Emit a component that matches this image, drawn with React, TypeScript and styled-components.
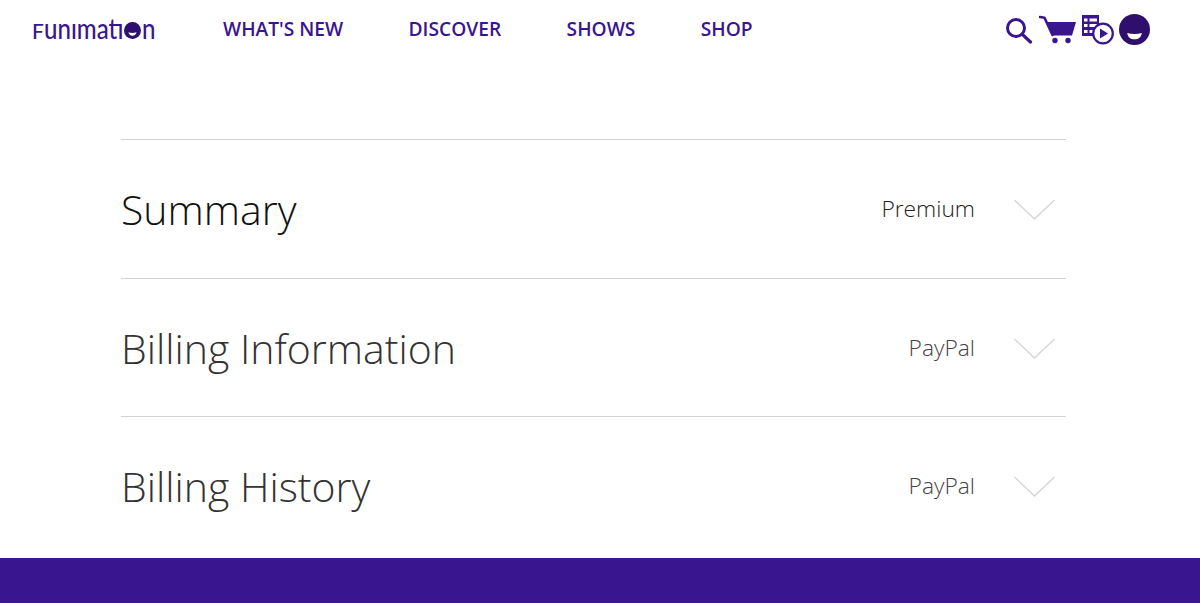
import React from "react";
import styled, { createGlobalStyle } from "styled-components";

const Global = createGlobalStyle`
  html, body { margin: 0; padding: 0; background: #fff; }
  body { font-family: "Open Sans", "Liberation Sans", sans-serif; }
`;

const Page = styled.div`
  width: 1200px;
  height: 603px;
  display: flex;
  flex-direction: column;
  overflow: hidden;
  background: #fff;
`;

const Header = styled.header`
  height: 59px;
  display: flex;
  align-items: center;
  padding: 0 50px 0 32px;
  flex: none;
`;

const Logo = styled.div`
  width: 124px;
  display: flex;
  align-items: baseline;
  color: #3a1590;
  font-family: "Lato", sans-serif;
  font-weight: 500;
  line-height: 30px;
  font-size: 29px;
`;

const LogoCap = styled.span`
  font-size: 21px;
  width: 12px;
  flex: none;
`;

const LogoWord = styled.span`
  display: inline-block;
  width: 80px;
  flex: none;
  white-space: nowrap;
  transform: scaleX(0.83);
  transform-origin: left center;
`;

const LogoDot = styled.span`
  width: 17px;
  height: 17px;
  flex: none;
  display: flex;
  align-self: center;
  margin-top: 1px;
`;

const LogoEnd = styled.span`
  display: inline-block;
  flex: none;
  margin-left: 1px;
  transform: scaleX(0.83);
  transform-origin: left center;
`;

const Nav = styled.nav`
  display: flex;
  margin-left: 67px;
  margin-top: -2px;
  gap: 65.4px;
`;

const NavLink = styled.a`
  color: #3a1590;
  font-size: 19.2px;
  font-weight: 600;
  line-height: 24px;
  white-space: nowrap;
`;

const Icons = styled.div`
  margin-left: auto;
  display: flex;
  align-items: center;
  gap: 5px;
  color: #3a1590;
`;

const Main = styled.main`
  flex: 1;
  padding: 80px 134px 0 121px;
`;

const Row = styled.section`
  height: 137.7px;
  border-top: 1px solid #d2d2d2;
  display: flex;
  align-items: center;
  justify-content: space-between;
  padding-right: 11px;
`;

const Title = styled.h2<{ $dark?: boolean }>`
  margin: 0;
  font-size: 41px;
  font-weight: 300;
  line-height: 56px;
  color: ${(p) => (p.$dark ? "#111" : "#333")};
`;

const Right = styled.div`
  display: flex;
  align-items: center;
  gap: 39px;
`;

const Value = styled.span<{ $dark?: boolean }>`
  font-size: 22.8px;
  font-weight: 300;
  line-height: 30px;
  color: ${(p) => (p.$dark ? "#222" : "#444")};
`;

const ChevronIcon = styled.svg`
  margin-top: 2px;
  flex: none;
`;

const Footer = styled.footer`
  height: 45px;
  background: #3a1590;
  flex: none;
`;

const Chevron = () => (
  <ChevronIcon width="41" height="22" viewBox="0 0 41 22" fill="none">
    <path d="M0.5 1 L20.5 20 L40.5 1" stroke="#d4d4d4" strokeWidth="1.3" />
  </ChevronIcon>
);

const Face = ({ size }: { size: number }) => (
  <svg width={size} height={size} viewBox="0 0 32 32">
    <circle cx="16" cy="16" r="16" fill="#2f0f6e" />
    <path d="M8.5 19.5 C13 21 19 21 23.5 19.5 C23 24 20 26 16 26 C12 26 9 24 8.5 19.5 Z" fill="#fff" />
  </svg>
);

const rows = [
  { title: "Summary", value: "Premium", dark: true },
  { title: "Billing Information", value: "PayPal" },
  { title: "Billing History", value: "PayPal" },
];

export default function App() {
  return (
    <Page>
      <Global />
      <Header>
        <Logo>
          <LogoCap>F</LogoCap>
          <LogoWord>unımatı</LogoWord>
          <LogoDot>
            <Face size={17} />
          </LogoDot>
          <LogoEnd>n</LogoEnd>
        </Logo>
        <Nav>
          <NavLink>WHAT'S NEW</NavLink>
          <NavLink>DISCOVER</NavLink>
          <NavLink>SHOWS</NavLink>
          <NavLink>SHOP</NavLink>
        </Nav>
        <Icons>
          <svg width="28" height="28" viewBox="0 0 28 28" fill="none" stroke="currentColor" strokeWidth="3">
            <circle cx="10" cy="12" r="8.5" />
            <path d="M16.3 18.3 L24.5 26" strokeLinecap="round" strokeWidth="3.2" />
          </svg>
          <svg width="37" height="30" viewBox="0 0 37 30" fill="currentColor">
            <path d="M1 2 L5.5 2.8 L13.5 20" fill="none" stroke="currentColor" strokeWidth="2.6" strokeLinecap="round" strokeLinejoin="round" />
            <path d="M8.5 7 H37 L33 20.5 H13.5 Z" />
            <circle cx="16" cy="25.5" r="2.7" />
            <circle cx="29" cy="25.5" r="2.7" />
          </svg>
          <svg width="33" height="31" viewBox="0 0 33 31" fill="none">
            <rect x="1" y="1" width="17" height="21" fill="currentColor" />
            <path d="M3 4.5 H6.5 V7.5 H3 Z M8.5 4.5 H16 V7.5 H8.5 Z M3 10 H6.5 V13 H3 Z M8.5 10 H16 V13 H8.5 Z M3 16 H6.5 V19 H3 Z M8.5 16 H16 V19 H8.5 Z" fill="#fff" />
            <circle cx="22" cy="19.5" r="9.8" stroke="currentColor" strokeWidth="2.2" fill="#fff" />
            <path d="M19 14.5 L27 19.5 L19 24.5 Z" fill="currentColor" />
          </svg>
          <Face size={31} />
        </Icons>
      </Header>
      <Main>
        {rows.map((r) => (
          <Row key={r.title}>
            <Title $dark={r.dark}>{r.title}</Title>
            <Right>
              <Value $dark={r.dark}>{r.value}</Value>
              <Chevron />
            </Right>
          </Row>
        ))}
      </Main>
      <Footer />
    </Page>
  );
}
